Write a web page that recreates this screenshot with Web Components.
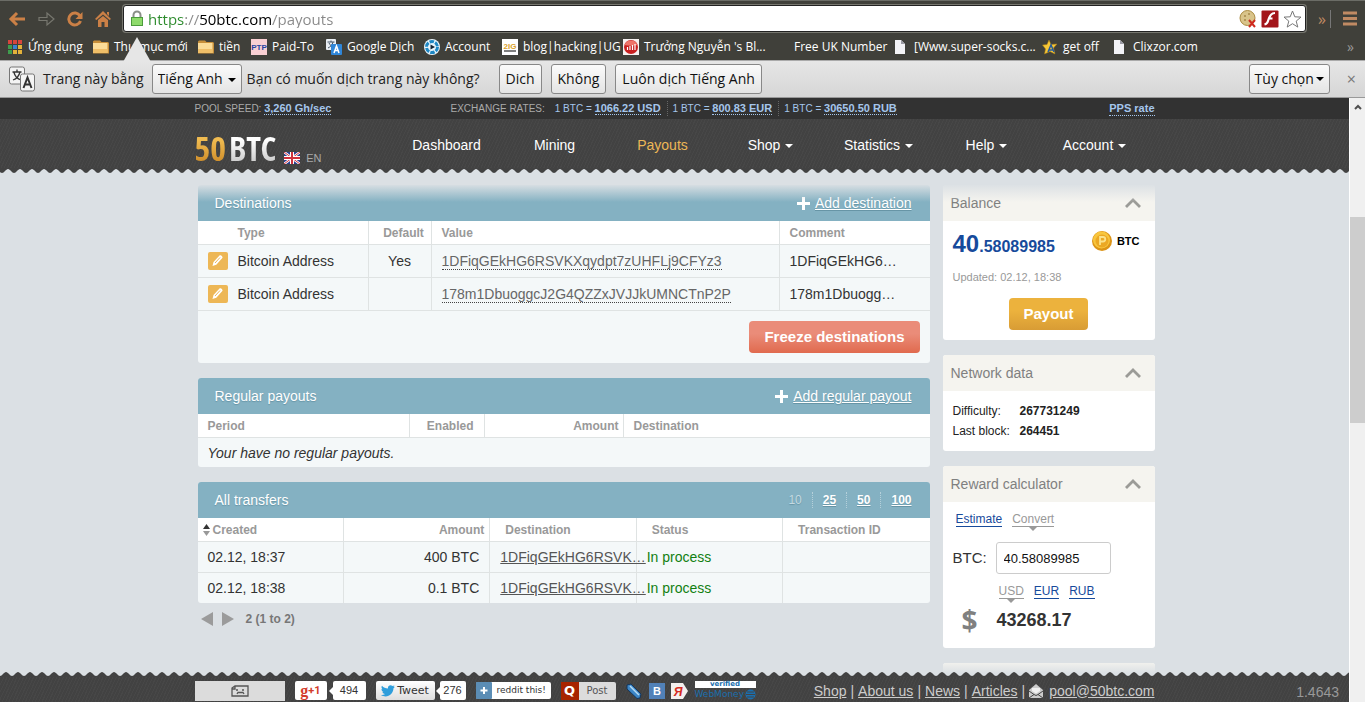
<!doctype html>
<html lang="en">
<head>
<meta charset="utf-8">
<title>50BTC - Payouts</title>
<style>
  html, body {
    height: 100%;
    margin: 0;
  }
  body {
    font: 14px/18px "Liberation Sans", Arial, sans-serif;
    color: #333;
  }
</style>
</head>
<body>
<app-window>
  <browser-toolbar slot="chrome"></browser-toolbar>
  <bookmark-bar slot="chrome"></bookmark-bar>
  <translate-bar slot="chrome"></translate-bar>
  <site-page></site-page>
  <scroll-rail></scroll-rail>
</app-window>

<script>
const base = `
  :host, * { box-sizing: border-box }
  a { color: inherit }
  button, input, select { font: inherit; color: inherit; margin: 0 }
  svg { display: block; flex: none }
`

function define (name, css, html, Base = HTMLElement) {
  const template = document.createElement('template')
  template.innerHTML = `<style>${base}${css}</style>${html}`
  customElements.define(name, class extends Base {
    constructor () {
      super()
      this.attachShadow({ mode: 'open' }).append(template.content.cloneNode(true))
    }
  })
}

// copies the heading attribute into the card's h2
class Titled extends HTMLElement {
  connectedCallback () {
    this.shadowRoot.querySelector('h2').textContent = this.getAttribute('heading')
  }
}

const icons = {
  apps: `<svg width="16" height="16" viewBox="0 0 16 16"><path fill="#d8453c" d="M1 1h4v4H1zM6 1h4v4H6zM11 1h4v4h-4z"/><path fill="#3f9d4d" d="M1 6h4v4H1z"/><path fill="#3c82cf" d="M6 6h4v4H6z"/><path fill="#e4b23a" d="M11 6h4v4h-4zM6 11h4v4H6zM11 11h4v4h-4z"/><path fill="#3f9d4d" d="M1 11h4v4H1z"/></svg>`,
  folder: `<svg width="16" height="16" viewBox="0 0 16 16"><path fill="#c78f3a" d="M0 2.500l1-1h6l1.500 1.500H15l1 1V14.500H0z"/><path fill="#fbdc98" d="M0 4h14.500v10H0z"/><path fill="#f0bf68" d="M0 10h14.500v4H0z"/></svg>`,
  ptp: `<svg width="16" height="16" viewBox="0 0 16 16"><rect width="16" height="16" fill="#f9cfd2"/><text x="8" y="11" text-anchor="middle" font-family="Liberation Sans" font-weight="700" font-size="8" fill="#2744a0">PTP</text></svg>`,
  translate: `<svg width="16" height="16" viewBox="0 0 16 16"><rect width="10" height="11" rx="1" fill="#e9eef3"/><path d="M1.500 3h7M5 1.500V3M7 3c-.500 3-3 5-5 6M3 4c1 2 3 4 5 4.500" stroke="#456" fill="none"/><rect x="5" y="5" width="11" height="11" rx="1" fill="#2f86d8"/><path d="M8 14l2.500-7 2.500 7M9 11.500h3" stroke="#fff" stroke-width="1.500" fill="none"/></svg>`,
  wheel: `<svg width="16" height="16" viewBox="0 0 16 16"><circle cx="8" cy="8" r="8" fill="#e8f4fb"/><circle cx="8" cy="8" r="5.500" fill="none" stroke="#1d87c4" stroke-width="3" stroke-dasharray="4.500 1.200"/><path d="M6.500 5.500v5L11 8z" fill="#123"/></svg>`,
  zig: `<svg width="16" height="16" viewBox="0 0 16 16"><rect width="16" height="16" fill="#fff"/><text x="8" y="10" text-anchor="middle" font-family="Liberation Sans" font-weight="700" font-size="8" fill="#dca128">2IG</text><path d="M2 12h12" stroke="#555" stroke-width="1.500"/></svg>`,
  blog: `<svg width="16" height="16" viewBox="0 0 16 16"><rect width="16" height="16" fill="#f6f1f0"/><circle cx="8" cy="8" r="7" fill="#c81f1f"/><path d="M1.500 6a7 7 0 0 1 13 0c-4 1-9 1-13 0z" fill="#ee7469"/><path d="M4.500 11V8M7 11V7M9.500 11V6M12 11V5" stroke="#fff" stroke-width="1.200"/></svg>`,
  page: `<svg width="16" height="16" viewBox="0 0 16 16"><path fill="#f3f3f6" d="M2 1h6l4 4v10H2z"/><path fill="#9b9ba4" d="M8 1v4h4z"/></svg>`,
  star: `<svg width="16" height="16" viewBox="0 0 16 16"><path fill="#f6c637" stroke="#a87a14" stroke-width=".500" d="M7 1l2 4.500 6-.500-3.500 4L13 15l-5-2.500L2.500 15l1-5L.500 6l4.500-.500z"/><path d="M6 13l3-7 3 7M7 11h4" stroke="#245a9c" stroke-width="1.500" fill="none"/></svg>`,
  none: `<svg width="16" height="16"></svg>`,
  chevron: `<svg width="16" height="10" viewBox="0 0 16 10"><path d="M1 9l7-7 7 7" fill="none" stroke="#9b9b97" stroke-width="2.800"/></svg>`,
  plus: `<svg width="13" height="13" viewBox="0 0 13 13"><path d="M6.500 0v13M0 6.500h13" stroke="#fff" stroke-width="3"/></svg>`,
  pencil: `<svg width="20" height="18" viewBox="0 0 20 18"><rect width="20" height="18" rx="2" fill="#edb756"/><path d="M4.500 14l1-4 6-6.500c1-1 3.800 1.300 2.800 2.600l-6 6.600z" fill="#fff"/><path d="M7 11l5-5.500" stroke="#edb756"/></svg>`
}

define('app-window', `
  :host {
    display: flex;
    flex-direction: column;
    height: 100vh;
    overflow: hidden;
  }
  .view {
    flex: 1;
    min-height: 0;
    display: flex;
  }
`, `<slot name="chrome"></slot><div class="view"><slot></slot></div>`)

define('browser-toolbar', `
  :host {
    display: flex;
    align-items: center;
    gap: 12px;
    height: 33px;
    padding: 3px 8px 0 8px;
    background: #40403a;
    border-top: 1px solid #6b6c66;
    font-family: "Open Sans", "Noto Sans", sans-serif;
  }
  button {
    padding: 0;
    border: 0;
    background: none;
  }
  .omnibox {
    flex: 1;
    display: flex;
    align-items: center;
    gap: 4px;
    height: 27px;
    padding: 0 3px 0 6px;
    background: #fff;
    border: 1px solid #222;
    border-radius: 3px;
    box-shadow: 0 0 0 1px #77776f;
  }
  input {
    flex: 1;
    min-width: 0;
    border: 0;
    padding: 0;
    font-size: 15px;
    outline: 0;
    -webkit-text-fill-color: transparent;
    background: linear-gradient(90deg, #2b8a2b 0 37px, #888 37px 51px, #000 51px 123px, #888 123px);
    -webkit-background-clip: text;
    background-clip: text;
  }
  .more {
    color: #c08a63;
    font-size: 16px;
    padding-right: 4px;
    border-right: 1px solid #777;
    line-height: 18px;
  }
`, `
  <button aria-label="Back"><svg width="18" height="16" viewBox="0 0 18 16"><path d="M9 2L3 8l6 6M3 8h14" fill="none" stroke="#cb8046" stroke-width="3"/></svg></button>
  <button aria-label="Forward"><svg width="17" height="16" viewBox="0 0 17 16"><path d="M1 6.500h8V2l7 6-7 6V9.500H1z" fill="none" stroke="#77776f" stroke-width="1.200"/></svg></button>
  <button aria-label="Reload"><svg width="16" height="16" viewBox="0 0 16 16"><path d="M13 5A6 6 0 1 0 13.500 10" fill="none" stroke="#cb8046" stroke-width="3"/><path d="M15.500 1v7h-7z" fill="#cb8046"/></svg></button>
  <button aria-label="Home"><svg width="16" height="16" viewBox="0 0 16 16"><path d="M8 0l8 8-1.500 1L8 3.500 1.500 9 0 8zM12 1h2v4l-2-2zM3 9l5-4 5 4v7h-3.500v-5h-3v5H3z" fill="#cb8046"/></svg></button>
  <div class="omnibox">
    <svg width="14" height="17" viewBox="0 0 14 17"><path d="M3.500 8V5a3.500 3.500 0 0 1 7 0v3" fill="none" stroke="#8a8f88" stroke-width="2"/><rect x="1.500" y="7.500" width="11" height="8" fill="#8edb6b" stroke="#4c9b3c"/></svg>
    <input aria-label="Address" value="https://50btc.com/payouts" spellcheck="false">
    <button aria-label="Cookies blocked"><svg width="18" height="18" viewBox="0 0 18 18"><circle cx="8.500" cy="8" r="7.500" fill="#d9c48a" stroke="#aa8a3f"/><path d="M5 6h2M9 4h2M5 10h2" stroke="#a5884a" stroke-width="1.500"/><path d="M10 10l6 7M16 10l-6 7" stroke="#cf2a1e" stroke-width="2"/></svg></button>
    <button aria-label="Flash"><svg width="18" height="18" viewBox="0 0 18 18"><rect x=".500" y=".500" width="17" height="17" rx="1" fill="#a3151a"/><path d="M14 3c-5 0-6 5-7 8-.500 2-1.500 3-3.500 3.500M7.500 8.500h4" fill="none" stroke="#fff" stroke-width="2.200"/></svg></button>
    <button aria-label="Bookmark this page"><svg width="19" height="18" viewBox="0 0 19 18"><path d="M9.500 1l2.300 5.800 6.200.300-4.800 4 1.600 6-5.300-3.400-5.300 3.400 1.600-6-4.800-4 6.200-.300z" fill="#fff" stroke="#777"/></svg></button>
  </div>
  <button class="more" aria-label="More extensions">»</button>
  <button aria-label="Menu"><svg width="14" height="15" viewBox="0 0 14 15"><path d="M0 2h14M0 7.500h14M0 13h14" stroke="#c08a63" stroke-width="3"/></svg></button>
`)

define('bookmark-item', `
  :host { display: block; min-width: 0 }
  a {
    display: flex;
    align-items: center;
    gap: 5px;
    color: #fff;
    text-decoration: none;
    white-space: nowrap;
  }
`, '<a href="#"><slot name="icon"></slot><slot></slot></a>')

const bookmarks = [
  ['apps', 'Ứng dụng'],
  ['folder', 'Thư mục mới'],
  ['folder', 'tiền'],
  ['ptp', 'Paid-To'],
  ['translate', 'Google Dịch'],
  ['wheel', 'Account'],
  ['zig', 'blog|hacking|UG'],
  ['blog', "Trưởng Nguyễn 's Bl..."],
  ['none', 'Free UK Number'],
  ['page', '[Www.super-socks.c...'],
  ['star', 'get off'],
  ['page', 'Clixzor.com']
]

define('bookmark-bar', `
  :host {
    display: grid;
    grid-template-columns: 86px 105px 53px 75px 98px 78px 121px 150px 120px 149px 70px 1fr auto;
    align-items: center;
    height: 27px;
    padding: 0 11px 0 7px;
    background: #40403a;
    font: 500 12px/18px "Open Sans", "Noto Sans", sans-serif;
  }
  button {
    padding: 0;
    border: 0;
    background: none;
    color: #999;
    font-size: 14px;
  }
`, bookmarks.map(([icon, label]) =>
  `<bookmark-item>${icons[icon].replace('<svg', '<svg slot="icon" style="flex:none"')}${label}</bookmark-item>`
).join('') + '<button aria-label="More bookmarks">»</button>')

define('translate-bar', `
  :host {
    position: relative;
    display: flex;
    align-items: center;
    height: 38px;
    padding: 0 9px;
    background: linear-gradient(#e6e6e6, #d6d6d6);
    border-top: 1px solid #aaa;
    border-bottom: 1px solid #999;
    font: 14px/20px "Open Sans", "Noto Sans", sans-serif;
    color: #222;
    white-space: nowrap;
  }
  .pointer {
    position: absolute;
    left: 123px;
    top: -24px;
  }
  label { margin-left: 7px }
  button, select {
    height: 30px;
    padding: 0 6px;
    border: 1px solid #888;
    border-radius: 3px;
    background: linear-gradient(#fbfbfb, #e4e4e4);
    color: #111;
  }
  .lang { position: relative; margin: 0 5px 0 8px }
  .lang select { appearance: none; padding: 0 17px 0 5px; width: 90px }
  .lang svg {
    position: absolute;
    right: 6px;
    top: 14px;
  }
  .actions { display: flex; gap: 9px; margin: 0 auto 0 19px }
  .options { display: flex; align-items: center; gap: 2px; padding: 0 5px }
  .close {
    margin-left: 17px;
    padding: 0;
    border: 0;
    background: none;
    color: #777;
    font-size: 16px;
  }
`, `
  <svg class="pointer" width="28" height="25" viewBox="0 0 28 25"><path d="M0 25L14 0l14 25z" fill="#e6e6e6"/></svg>
  <svg width="27" height="26" viewBox="0 0 27 26"><rect x=".500" y="1" width="15" height="17" rx="2" fill="#f4f4f4" stroke="#777"/><path d="M3.500 6h9M8 3.500V6M11 6c-1 4-4 7-7 8M5 6.500c1 4 4 6.500 7 7.500" fill="none" stroke="#333" stroke-width="1.300"/><rect x="11.500" y="8" width="14" height="17" rx="2" fill="#f4f4f4" stroke="#777"/><path d="M14.500 22l4-10.500 4 10.500M16 18.500h5" fill="none" stroke="#333" stroke-width="2"/></svg>
  <label for="lang">Trang này bằng</label>
  <span class="lang"><select id="lang"><option>Tiếng Anh</option></select><svg width="8" height="4" viewBox="0 0 8 4"><path d="M0 0h8L4 4z"/></svg></span>
  <span>Bạn có muốn dịch trang này không?</span>
  <div class="actions"><button>Dich</button><button>Không</button><button>Luôn dịch Tiếng Anh</button></div>
  <button class="options">Tùy chọn<svg width="8" height="4" viewBox="0 0 8 4"><path d="M0 0h8L4 4z"/></svg></button>
  <button class="close" aria-label="Close">×</button>
`)

define('scroll-rail', `
  :host {
    display: flex;
    flex-direction: column;
    width: 16px;
    background: #f0f0f0;
    border-left: 1px solid #fff;
  }
  button { height: 17px; padding: 0; border: 0; background: none; display: grid; place-items: center }
  .before { flex: 102 }
  .thumb { flex: 206; background: #cdcdcd }
  .after { flex: 279 }
`, `<button aria-label="Scroll up"><svg width="8" height="6" viewBox="0 0 8 6"><path d="M1 5l3-3 3 3" fill="none" stroke="#505050" stroke-width="2"/></svg></button>
<div class="before"></div><div class="thumb"></div><div class="after"></div>`)

define('site-topbar', `
  :host {
    display: grid;
    grid-template-columns: 1fr minmax(0, 960px) 1fr;
    background: #323232;
    color: #aaa;
    font-size: 10px;
    line-height: 14px;
  }
  .row {
    grid-column: 2;
    display: grid;
    grid-template-columns: 256px 1fr auto;
    align-items: center;
    height: 21px;
    white-space: nowrap;
  }
  a {
    color: #a5c6ec;
    font-size: 11px;
    font-weight: bold;
    text-decoration: none;
    border-bottom: 1px dotted #a5c6ec;
  }
  .rates { display: flex; align-items: center; color: #a5c6ec }
  .rates span { padding: 0 6px 0 5px; border-right: 1px dotted #666 }
  .rates span:last-child { border: 0 }
  .rates b { font-weight: normal; color: #aaa; margin-right: 5px }
`, `<div class="row">
  <div>POOL SPEED: <a href="#">3,260 Gh/sec</a></div>
  <div class="rates"><b>EXCHANGE RATES:</b>
    <span>1 BTC = <a href="#">1066.22 USD</a></span><span>1 BTC = <a href="#">800.83 EUR</a></span><span>1 BTC = <a href="#">30650.50 RUB</a></span>
  </div>
  <a href="#">PPS rate</a>
</div>`)

define('site-header', `
  :host {
    position: relative;
    z-index: 1;
    display: grid;
    grid-template-columns: 1fr minmax(0, 960px) 1fr;
    background: repeating-linear-gradient(115deg, #474747 0 1px, #424242 1px 3px);
  }
  .row {
    grid-column: 2;
    display: flex;
    align-items: center;
    height: 49px;
  }
  .logo {
    display: flex;
    gap: 3px;
    padding-top: 8px;
    text-decoration: none;
    font: bold 34px/40px "Open Sans Condensed", Lato, sans-serif;
  }
  .logo span {
    color: transparent;
    background: linear-gradient(#fff 30%, #d0d0d0 80%);
    -webkit-background-clip: text;
    background-clip: text;
  }
  .logo .fifty { background-image: linear-gradient(#f0bb50 30%, #d2922e 80%) }
  .locale {
    align-self: flex-end;
    display: flex;
    align-items: center;
    gap: 6px;
    margin: 0 0 1px 8px;
    font-size: 11px;
    color: #aaa;
    text-decoration: none;
  }
  nav {
    display: grid;
    grid-template-columns: repeat(7, 108px);
    margin: 3px 6px 0 auto;
    text-align: center;
  }
  nav a { color: #fff; text-decoration: none }
  nav a.active { color: #edb756 }
  nav a.menu::after {
    content: "";
    display: inline-block;
    margin-left: 5px;
    vertical-align: 2px;
    border: 4px solid transparent;
    border-top-color: #fff;
    border-bottom: 0;
  }
  .edge {
    position: absolute;
    top: 100%;
    left: 0;
    right: 0;
    height: 34px;
    pointer-events: none;
    background: url("data:image/svg+xml,%3Csvg xmlns='http://www.w3.org/2000/svg' width='12' height='5'%3E%3Cpath d='M0 0H12V5C10 5 8 1 6 1S2 5 0 5Z' fill='%23424242'/%3E%3C/svg%3E") 2px 0 repeat-x, linear-gradient(#dbe0e4 16px, transparent);
  }
`, `<div class="row">
  <a class="logo" href="#" aria-label="50BTC"><span class="fifty">50</span><span>BTC</span></a>
  <a class="locale" href="#"><svg width="16" height="12" viewBox="0 0 16 12"><rect width="16" height="12" fill="#2a3f8f"/><path d="M0 0l16 12M16 0L0 12" stroke="#fff" stroke-width="2.500"/><path d="M0 0l16 12M16 0L0 12" stroke="#d0303c"/><path d="M8 0v12M0 6h16" stroke="#fff" stroke-width="4"/><path d="M8 0v12M0 6h16" stroke="#d0303c" stroke-width="2"/></svg>EN</a>
  <nav>
    <a href="#">Dashboard</a><a href="#">Mining</a><a href="#" class="active">Payouts</a><a href="#" class="menu">Shop</a><a href="#" class="menu">Statistics</a><a href="#" class="menu">Help</a><a href="#" class="menu">Account</a>
  </nav>
</div><div class="edge"></div>`)

define('content-panel', `
  :host {
    display: block;
    border-radius: 3px;
    overflow: hidden;
    background: #f4f8f9;
  }
  header {
    display: flex;
    align-items: center;
    justify-content: space-between;
    height: 36px;
    padding: 0 18px 0 17px;
    background: #84b1c2;
    color: #fff;
    text-shadow: 0 1px 1px #6795a6;
  }
  h2 { margin: 0; font: inherit }
`, '<header><h2></h2><slot name="action"></slot></header><slot></slot>', Titled)

const tableStyle = `
  :host { display: block }
  table {
    width: 100%;
    table-layout: fixed;
    border-spacing: 0;
    white-space: nowrap;
  }
  th, td {
    padding: 0 10px;
    border-bottom: 1px solid #dfe3e3;
    border-right: 1px solid #dfe3e3;
    text-align: left;
  }
  th:last-child, td:last-child { border-right: 0 }
  th {
    height: 24px;
    background: #fff;
    color: #999;
    font-size: 12px;
  }
  .center { text-align: center }
  .right { text-align: right }
  .action { display: flex; align-items: center; gap: 5px; color: #fff }
`

define('destinations-panel', `${tableStyle}
  td { height: 33px }
  td a {
    color: #666;
    text-decoration: none;
    border-bottom: 1px dotted #444;
  }
  .type { display: flex; align-items: center; gap: 10px }
  .type button { padding: 0; border: 0; background: none }
  th.first { padding-left: 40px }
  th.center { padding-right: 2px }
  .foot { display: flex; justify-content: flex-end; padding: 10px }
  .freeze {
    height: 32px;
    padding: 0 15px;
    border: 0;
    border-radius: 4px;
    background: linear-gradient(#ea8c79 40%, #e06a4e);
    color: #fff;
    font-weight: bold;
    font-size: 15px;
  }
`, `<content-panel heading="Destinations">
  <span slot="action" class="action">${icons.plus}<a href="#">Add destination</a></span>
  <table>
    <colgroup><col style="width:171px"><col style="width:63px"><col><col style="width:150px"></colgroup>
    <thead><tr><th class="first">Type</th><th class="center">Default</th><th>Value</th><th>Comment</th></tr></thead>
    <tbody>
      <tr><td><span class="type"><button aria-label="Edit">${icons.pencil}</button>Bitcoin Address</span></td><td class="center">Yes</td><td><a href="#">1DFiqGEkHG6RSVKXqydpt7zUHFLj9CFYz3</a></td><td>1DFiqGEkHG6…</td></tr>
      <tr><td><span class="type"><button aria-label="Edit">${icons.pencil}</button>Bitcoin Address</span></td><td></td><td><a href="#">178m1DbuoggcJ2G4QZZxJVJJkUMNCTnP2P</a></td><td>178m1Dbuogg…</td></tr>
    </tbody>
  </table>
  <div class="foot"><button class="freeze">Freeze destinations</button></div>
</content-panel>`)

define('regular-panel', `${tableStyle}
  td { height: 29px; border: 0; font-style: italic }
  th.right { padding-right: 4px }
  th.enabled { padding-right: 10px; text-align: right }
`, `<content-panel heading="Regular payouts">
  <span slot="action" class="action">${icons.plus}<a href="#">Add regular payout</a></span>
  <table>
    <colgroup><col style="width:212px"><col style="width:75px"><col style="width:139px"><col></colgroup>
    <thead><tr><th>Period</th><th class="enabled">Enabled</th><th class="right">Amount</th><th>Destination</th></tr></thead>
    <tbody><tr><td colspan="4">Your have no regular payouts.</td></tr></tbody>
  </table>
</content-panel>`)

define('transfers-panel', `${tableStyle}
  th { padding: 0 5px 0 15px }
  th.sorted { padding-left: 5px }
  th.sorted span { display: flex; align-items: center; gap: 3px }
  td { height: 31px }
  td a { color: #555 }
  tbody tr:last-child td { border-bottom: 0; height: 30px }
  .state { color: #128012 }
  .sizes { display: flex; font-weight: bold; font-size: 12px; line-height: 16px; margin-right: -10px }
  .sizes > * { padding: 0 10px; border-left: 1px dotted #b5d0da; color: #fff }
  .sizes > :first-child { border: 0; color: #c4dae2; font-weight: normal }
  .pager {
    display: flex;
    align-items: center;
    gap: 9px;
    margin: 7px 0 0 3px;
    color: #777;
    font-size: 12px;
    font-weight: bold;
  }
  .pager button { padding: 0; border: 0; background: none }
  .pager span { margin-left: 3px }
`, `<content-panel heading="All transfers">
  <div slot="action" class="sizes"><span>10</span><a href="#">25</a><a href="#">50</a><a href="#">100</a></div>
  <table>
    <thead><tr><th class="sorted"><span><svg width="7" height="12" viewBox="0 0 7 12"><path d="M0 5h7L3.500 0z" fill="#333"/><path d="M0 7h7l-3.500 5z" fill="#999"/></svg>Created</span></th><th class="right">Amount</th><th>Destination</th><th>Status</th><th>Transaction ID</th></tr></thead>
    <tbody>
      <tr><td>02.12, 18:37</td><td class="right">400 BTC</td><td><a href="#">1DFiqGEkHG6RSVK…</a></td><td class="state">In process</td><td></td></tr>
      <tr><td>02.12, 18:38</td><td class="right">0.1 BTC</td><td><a href="#">1DFiqGEkHG6RSVK…</a></td><td class="state">In process</td><td></td></tr>
    </tbody>
  </table>
</content-panel>
<div class="pager">
  <button aria-label="Previous page"><svg width="12" height="14" viewBox="0 0 12 14"><path d="M12 0v14L0 7z" fill="#9b9b9b"/></svg></button>
  <button aria-label="Next page"><svg width="12" height="14" viewBox="0 0 12 14"><path d="M0 0v14l12-7z" fill="#9b9b9b"/></svg></button>
  <span>2 (1 to 2)</span>
</div>`)

define('side-card', `
  :host {
    display: block;
    border-radius: 3px;
    overflow: hidden;
    background: #fff;
  }
  header {
    display: flex;
    align-items: center;
    justify-content: space-between;
    height: 36px;
    padding: 0 14px 0 8px;
    background: #f5f4ef;
    color: #808080;
  }
  h2 { margin: 0; font: inherit }
  button { padding: 0; border: 0; background: none }
  .body { padding: 10px }
`, `<header><h2></h2><button aria-label="Collapse">${icons.chevron}</button></header><div class="body"><slot></slot></div>`, Titled)

define('balance-card', `
  :host { display: block }
  .sum { display: flex; align-items: flex-start; justify-content: space-between; height: 36px }
  .amount { color: #174a9b; font-weight: bold; font-size: 16px; line-height: 26px }
  .amount b { font-size: 24px }
  .unit { display: flex; align-items: center; gap: 5px; margin-right: 5px; color: #000; font-weight: bold; font-size: 11px }
  .updated { color: #999; font-size: 11px; line-height: 20px }
  .payout {
    display: block;
    height: 32px;
    margin: 11px auto 0;
    padding: 0 14px;
    border: 0;
    border-radius: 4px;
    background: linear-gradient(#ecb23d 40%, #d89c35);
    color: #fff;
    font-weight: bold;
    font-size: 15px;
  }
`, `<side-card heading="Balance">
  <div class="sum"><span class="amount"><b>40</b>.58089985</span><span class="unit"><svg width="20" height="20" viewBox="0 0 20 20"><circle cx="10" cy="10" r="10" fill="#dc9417"/><circle cx="9.500" cy="9" r="8.500" fill="#f8c63e"/><circle cx="10" cy="10" r="6.500" fill="#eba824"/><path d="M8 14V6h3a2.200 2.200 0 0 1 0 4.500H8" fill="none" stroke="#fbe28b" stroke-width="1.800"/></svg>BTC</span></div>
  <div class="updated">Updated: 02.12, 18:38</div>
  <button class="payout">Payout</button>
</side-card>`)

define('network-card', `
  :host { display: block }
  dl {
    display: grid;
    grid-template-columns: 67px 1fr;
    margin: 0;
    font-size: 12px;
    line-height: 20px;
    color: #222;
  }
  dd { margin: 0; font-weight: bold }
`, `<side-card heading="Network data">
  <dl><dt>Difficulty:</dt><dd>267731249</dd><dt>Last block:</dt><dd>264451</dd></dl>
</side-card>`)

define('calculator-card', `
  :host { display: block }
  .tabs { display: flex; gap: 10px; font-size: 12px; line-height: 14px; margin-left: 3px }
  .tabs a { color: #174a9b; text-decoration: none; border-bottom: 1px solid }
  .tabs .on { position: relative; color: #999 }
  .tabs .on::after {
    content: "";
    position: absolute;
    left: 50%;
    top: 100%;
    margin-left: -5px;
    border: 5px solid transparent;
    border-top-color: #999;
    border-bottom: 0;
  }
  .grid {
    display: grid;
    grid-template-columns: 43px 1fr;
    align-items: center;
    row-gap: 10px;
    margin: 15px 0 7px;
  }
  label { font-size: 15px }
  input {
    width: 115px;
    height: 32px;
    padding: 0 7px;
    border: 1px solid #ccc;
    border-radius: 3px;
    font-size: 13px;
    color: #111;
  }
  .grid .tabs { grid-column: 2 }
  .sign { padding-left: 9px; color: #808080; font: bold 28px/22px "Open Sans", "Noto Sans", sans-serif }
  output { font-size: 18px; font-weight: bold; line-height: 22px; padding-left: 1px }
`, `<side-card heading="Reward calculator">
  <div class="tabs"><a href="#">Estimate</a><a href="#" class="on">Convert</a></div>
  <div class="grid">
    <label for="btc">BTC:</label><input id="btc" value="40.58089985">
    <div class="tabs"><a href="#" class="on">USD</a><a href="#">EUR</a><a href="#">RUB</a></div>
    <span class="sign">$</span><output for="btc">43268.17</output>
  </div>
</side-card>`)

define('share-buttons', `
  :host {
    display: flex;
    align-items: center;
    gap: 10px;
    font: 11px/19px "DejaVu Sans", sans-serif;
    color: #333;
    white-space: nowrap;
  }
  a { color: inherit; text-decoration: none; display: flex; align-items: center; justify-content: center; height: 19px; background: #fff; border-radius: 2px }
  .pair { display: flex; gap: 6px }
  .blank { width: 90px; height: 20px; background: #dcdcdc; border-radius: 0 }
  .plus { width: 32px; color: #d33c2c; font: bold 16px/19px "Liberation Serif", serif }
  .plus small { font: bold 11px/19px Roboto, sans-serif }
  .count { position: relative; width: 33px; font: 11px/19px "Liberation Sans", sans-serif }
  .count::before {
    content: "";
    position: absolute;
    right: 100%;
    top: 6px;
    border: 4px solid transparent;
    border-right-color: #fff;
    border-left: 0;
  }
  .tweet { width: 59px; gap: 2px; background: linear-gradient(#fff, #dedede) }
  .pair.tw { gap: 5px }
  .tw .count { width: 26px }
  .reddit { width: 75px; height: 17px; gap: 5px; font-size: 9px; justify-content: flex-start }
  .post { width: 55px; height: 18px; gap: 8px; background: #dcdcdc; font-size: 10px; justify-content: flex-start; color: #555 }
  .post b { width: 18px; text-align: center; background: #a82400; color: #fff; font-size: 13px; line-height: 18px }
  .small { display: flex; gap: 7px; align-items: center }
  .small .icon { background: none; width: 16px; height: 16px }
  .wm { display: block; width: 61px; background: none; height: 20px; color: #1b6fae }
  .wm b { display: block; background: #fff; font-size: 7px; line-height: 7px; text-align: center }
  .wm span { display: flex; align-items: center; justify-content: space-between; font-size: 9px; line-height: 13px }
`, `
  <a class="blank" href="#" aria-label="Blocked content"><svg width="18" height="12" viewBox="0 0 18 12"><path d="M1 3l3-2h13v10H1zM4 1v3H1M5 5h2M11 5h2M6 9l1-1.500h5L13 9" fill="none" stroke="#555" stroke-width="1.300"/></svg></a>
  <span class="pair"><a class="plus" href="#">g<small>+1</small></a><a class="count" href="#">494</a></span>
  <span class="pair tw"><a class="tweet" href="#"><svg width="14" height="12" viewBox="0 0 14 12"><path d="M0 10c2 0 3-.400 4-1-1.500-.200-2.200-1-2.500-2h1C1 6.300.500 5.200.500 4l1 .300C.300 3.200.200 1.800 1 .800 2.500 2.600 4.500 3.500 7 3.600 6.500.500 9.500-.800 11.500 1L13.500.500 12.500 2l1.500-.200-1.500 1.500C12.500 9 6 14 0 10z" fill="#2f9edb"/></svg>Tweet</a><a class="count" href="#">276</a></span>
  <a class="reddit" href="#"><svg width="16" height="17" viewBox="0 0 16 17"><rect width="16" height="17" rx="1" fill="#5b8db5"/><path d="M8 5v7M4.500 8.500h7" stroke="#fff" stroke-width="2"/></svg>reddit this!</a>
  <a class="post" href="#"><b>Q</b>Post</a>
  <span class="small">
    <a class="icon" href="#" aria-label="LiveJournal"><svg width="16" height="16" viewBox="0 0 16 16"><path d="M1 2l4-1 10 10-1 4-3 .500L1 6z" fill="#3d87c8" stroke="#14365c"/><path d="M4 3l9 9" stroke="#b7dcf5" stroke-width="1.500"/></svg></a>
    <a class="icon" href="#" aria-label="VK"><svg width="16" height="16" viewBox="0 0 16 16"><rect width="16" height="16" fill="#5181b8"/><text x="8" y="12" text-anchor="middle" font-family="Liberation Sans" font-weight="700" font-size="11" fill="#fff">B</text></svg></a>
    <a class="icon" href="#" aria-label="Yandex"><svg width="17" height="16" viewBox="0 0 17 16"><path d="M0 0h12l5 8-5 8H0z" fill="#f4f0ee"/><text x="7" y="13" text-anchor="middle" font-family="Liberation Sans" font-style="italic" font-weight="700" font-size="12" fill="#d62a20">Я</text></svg></a>
    <a class="wm" href="#"><b>verified</b><span>WebMoney<svg width="11" height="11" viewBox="0 0 11 11"><circle cx="5.500" cy="5.500" r="5" fill="#1b6fae"/><path d="M2 3h7M1 5.500h9M2 8h7" stroke="#444"/></svg></span></a>
  </span>
`)

define('site-footer', `
  :host {
    position: relative;
    z-index: 1;
    display: grid;
    grid-template-columns: 1fr minmax(0, 960px) 1fr;
    align-items: center;
    height: 25px;
    background: repeating-linear-gradient(115deg, #474747 0 1px, #424242 1px 3px);
    color: #ccc;
  }
  .row { grid-column: 2; display: flex; justify-content: space-between; align-items: center; height: 25px; padding-top: 2px }
  .links { display: flex; gap: 4px; white-space: nowrap; align-items: center }
  .links svg { margin-right: 2px }
  .version { color: #999; text-align: right; padding: 4px 10px 0 0 }
  .edge {
    position: absolute;
    bottom: 100%;
    left: 0;
    right: 0;
    height: 16px;
    pointer-events: none;
    background: url("data:image/svg+xml,%3Csvg xmlns='http://www.w3.org/2000/svg' width='12' height='5'%3E%3Cpath d='M0 5V4C2 4 4 0 6 0S10 4 12 4V5Z' fill='%23424242'/%3E%3C/svg%3E") 0 100% repeat-x, linear-gradient(transparent, #dbe0e4 12px);
  }
`, `<div class="edge"></div>
<div class="row">
  <share-buttons></share-buttons>
  <div class="links"><a href="#">Shop</a>|<a href="#">About us</a>|<a href="#">News</a>|<a href="#">Articles</a>|<svg width="14" height="14" viewBox="0 0 14 14"><path d="M0 6l7-6 7 6v8H0z" fill="#ccc"/><path d="M3 4h8v3L7 9.500 3 7z" fill="#f0f0f0"/><path d="M0 7l5 3.500L0 14M14 7l-5 3.500 5 3.500M5 10.500l2 1 2-1" fill="none" stroke="#444"/></svg><a href="#">pool@50btc.com</a></div>
</div>
<div class="version">1.4643</div>`)

define('site-page', `
  :host {
    flex: 1;
    min-width: 0;
    display: flex;
    flex-direction: column;
    background: #dbe0e4;
  }
  main {
    flex: 1;
    min-height: 0;
    overflow: hidden;
    display: grid;
    grid-template-columns: 1fr minmax(0, 960px) 1fr;
    padding-top: 17px;
  }
  .columns {
    grid-column: 2;
    display: flex;
    align-items: flex-start;
    gap: 13px;
    padding-left: 3px;
  }
  .content, aside { display: flex; flex-direction: column; gap: 15px }
  .content { flex: 1; min-width: 0 }
  aside { width: 212px }
`, `<site-topbar></site-topbar>
<site-header></site-header>
<main><div class="columns">
  <div class="content">
    <destinations-panel></destinations-panel>
    <regular-panel></regular-panel>
    <transfers-panel></transfers-panel>
  </div>
  <aside>
    <balance-card></balance-card>
    <network-card></network-card>
    <calculator-card></calculator-card>
    <side-card heading=""></side-card>
  </aside>
</div></main>
<site-footer></site-footer>`)
</script>
</body>
</html>
